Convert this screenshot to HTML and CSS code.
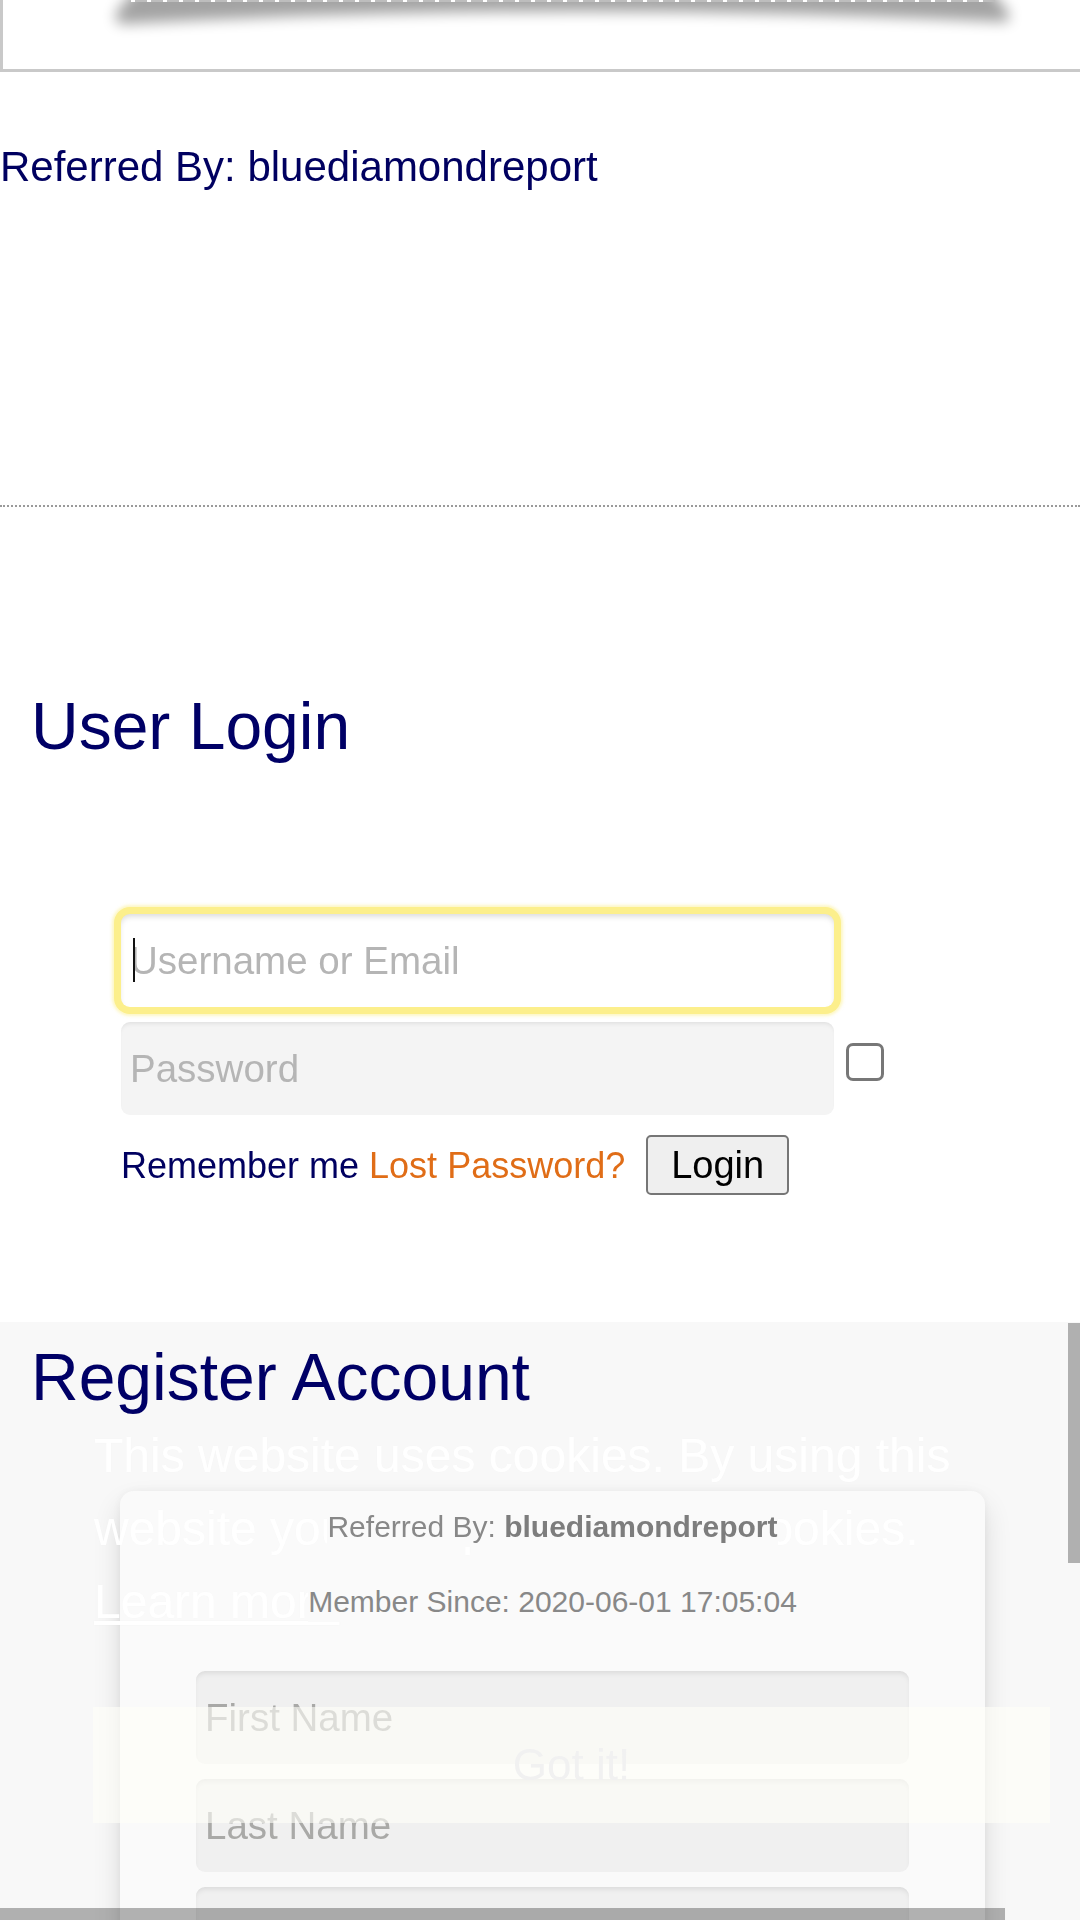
FILE: index.html
```html
<!DOCTYPE html>
<html lang="en">
<head>
<meta charset="utf-8">
<title>User Login</title>
<link rel="stylesheet" href="styles.css">
</head>
<body>
  <div class="topbox">
    <svg class="photo-shadow" width="1077" height="40" viewBox="3 0 1077 40" aria-hidden="true">
      <defs>
        <filter id="blur" x="-10%" y="-200%" width="120%" height="500%">
          <feGaussianBlur stdDeviation="7"/>
        </filter>
      </defs>
      <path d="M140 -16 L985 -16 L1002 4 Q1016 20 1004 22 Q560 0 122 24 Q108 20 123 4 Z" fill="#000" opacity="0.36" filter="url(#blur)"/>
      <rect x="131" y="0" width="864" height="2" fill="#bdbdbd"/>
      <line x1="131" y1="1" x2="995" y2="1" stroke="#fff" stroke-width="2" stroke-dasharray="4 12"/>
    </svg>
  </div>

  <p class="ref">Referred By: bluediamondreport</p>

  <hr class="dots">

  <section class="login">
    <h2 class="title">User Login</h2>
    <form class="login-form">
      <div class="field">
        <input class="inp focus" type="text" placeholder="Username or Email">
        <span class="caret"></span>
      </div>
      <div class="pw-row">
        <input class="inp pw" type="password" placeholder="Password">
        <input class="chk" type="checkbox">
      </div>
      <div class="remember">
        <span class="rem">Remember me</span>&nbsp;<a class="lost">Lost Password?</a>
        <button class="login-btn" type="button">Login</button>
      </div>
    </form>
  </section>

  <section class="register">
    <h2 class="title">Register Account</h2>
    <div class="card">
      <p class="meta"><span class="meta-txt">Referred By: <b>bluediamondreport</b></span></p>
      <p class="meta second"><span class="meta-txt">Member Since: 2020-06-01 17:05:04</span></p>
      <input class="inp reg first" type="text" placeholder="First Name">
      <input class="inp reg" type="text" placeholder="Last Name">
      <input class="inp reg" type="text" placeholder="">
    </div>
  </section>

  <div class="cookie-bg"></div>
  <div class="cookie">
    <p class="cookie-text">This website uses cookies. By using this website you accept our use of cookies. <a class="learn">Learn more</a></p>
    <button class="gotit" type="button">Got it!</button>
    <span class="thumb-v"></span>
    <span class="thumb-h"></span>
  </div>
</body>
</html>
```

FILE: styles.css
```css
html {
  overflow: hidden;
  background: #fff;
}

body {
  margin: 0;
  width: 1080px;
  font-family: "Liberation Sans", Arial, sans-serif;
  color: #000060;
}

.topbox {
  height: 69px;
  border-left: 3px solid #c9c9c9;
  border-bottom: 3px solid #c9c9c9;
  overflow: hidden;
}

.photo-shadow {
  display: block;
}

.ref {
  margin: 71px 0 0;
  font-size: 42px;
  line-height: 48px;
  color: #000060;
}

.dots {
  margin: 314px 0 0;
  height: 0;
  border: none;
  border-top: 2px dotted #9a9a9a;
}

.title {
  margin: 0 0 0 31px;
  font-size: 66px;
  line-height: 75px;
  font-weight: normal;
  color: #000066;
}

.login .title {
  margin-top: 182px;
}

.login-form {
  margin: 150px 0 0 121px;
}

.field {
  position: relative;
  width: 713px;
}

.inp {
  display: block;
  box-sizing: border-box;
  width: 713px;
  height: 93px;
  margin: 0;
  padding: 0 9px;
  border: none;
  border-radius: 9px;
  font-family: "Liberation Sans", Arial, sans-serif;
  font-size: 38.5px;
  color: #333;
  outline: none;
}

.inp::placeholder {
  color: #b5b5b5;
}

.focus {
  background: #fff;
  box-shadow: inset 0 4px 6px -2px rgba(0, 0, 0, 0.16), 0 0 0 7px #fcef8c, 0 0 3px 9px rgba(252, 239, 140, 0.5);
}

.caret {
  position: absolute;
  left: 12px;
  top: 24px;
  width: 2px;
  height: 44px;
  background: #111;
}

.pw-row {
  display: flex;
  align-items: flex-start;
  margin-top: 15px;
}

.pw {
  background: #f4f4f4;
  box-shadow: inset 0 4px 5px -3px rgba(0, 0, 0, 0.1);
}

.chk {
  appearance: none;
  -webkit-appearance: none;
  box-sizing: border-box;
  width: 38px;
  height: 38px;
  margin: 21px 0 0 12px;
  border: 3px solid #777;
  border-radius: 7px;
  background: #fff;
}

.remember {
  display: flex;
  align-items: baseline;
  margin-top: 20px;
  font-size: 36px;
  white-space: nowrap;
}

.rem {
  color: #000060;
}

.lost {
  color: #e06d17;
}

.login-btn {
  box-sizing: border-box;
  height: 60px;
  margin-left: 21px;
  padding: 0 23px;
  border: 2px solid #767676;
  border-radius: 5px;
  background: #efefef;
  font-family: "Liberation Sans", Arial, sans-serif;
  font-size: 38px;
  color: #000;
}

.register .title {
  margin-top: 145px;
}

.card {
  box-sizing: border-box;
  width: 865px;
  margin: 76px 0 0 120px;
  padding: 18px 76px 0;
  height: 520px;
  border-radius: 14px;
  background: #fafafa;
  box-shadow: 0 14px 28px rgba(0, 0, 0, 0.12), 0 0 12px rgba(0, 0, 0, 0.05);
}

.meta {
  margin: 0;
  font-size: 30px;
  line-height: 36px;
  text-align: center;
  color: #888;
}

.meta b {
  color: #7d7d7d;
}

.meta.second {
  margin-top: 39px;
}

.meta-txt {
  position: relative;
  z-index: 3;
  padding: 4px 0 4px;
  background: #fafafa;
}

.reg {
  background: #f0f0f0;
  margin-bottom: 15px;
  box-shadow: inset 0 4px 6px -3px rgba(0, 0, 0, 0.12);
}

.reg.first {
  margin-top: 51px;
}

.reg::placeholder {
  color: #a9a9a7;
}

.cookie-bg {
  position: fixed;
  left: 0;
  top: 1322px;
  width: 1080px;
  height: 598px;
  z-index: -1;
  background: rgba(0, 0, 10, 0.026);
}

.cookie {
  position: fixed;
  left: 0;
  top: 1322px;
  box-sizing: border-box;
  width: 1080px;
  height: 598px;
  padding: 97px 0 0 94px;
  z-index: 2;
}

.cookie-text {
  margin: 0;
  width: 930px;
  font-size: 48px;
  line-height: 73px;
  color: #fff;
  text-shadow: 0 0 2px rgba(0, 0, 0, 0.02);
}

.learn {
  color: #fff;
  text-decoration: underline;
}

.gotit {
  display: block;
  box-sizing: border-box;
  width: 957px;
  height: 116px;
  margin: 69px 0 0 -1px;
  border: none;
  background: rgba(255, 255, 248, 0.6);
  font-family: "Liberation Sans", Arial, sans-serif;
  font-size: 44px;
  color: #f1f1f1;
}

.thumb-v {
  position: absolute;
  right: 0;
  top: 1px;
  width: 12px;
  height: 240px;
  background: rgba(0, 0, 0, 0.29);
}

.thumb-h {
  position: absolute;
  left: 0;
  bottom: 0;
  width: 1005px;
  height: 12px;
  background: rgba(0, 0, 0, 0.29);
}
```
